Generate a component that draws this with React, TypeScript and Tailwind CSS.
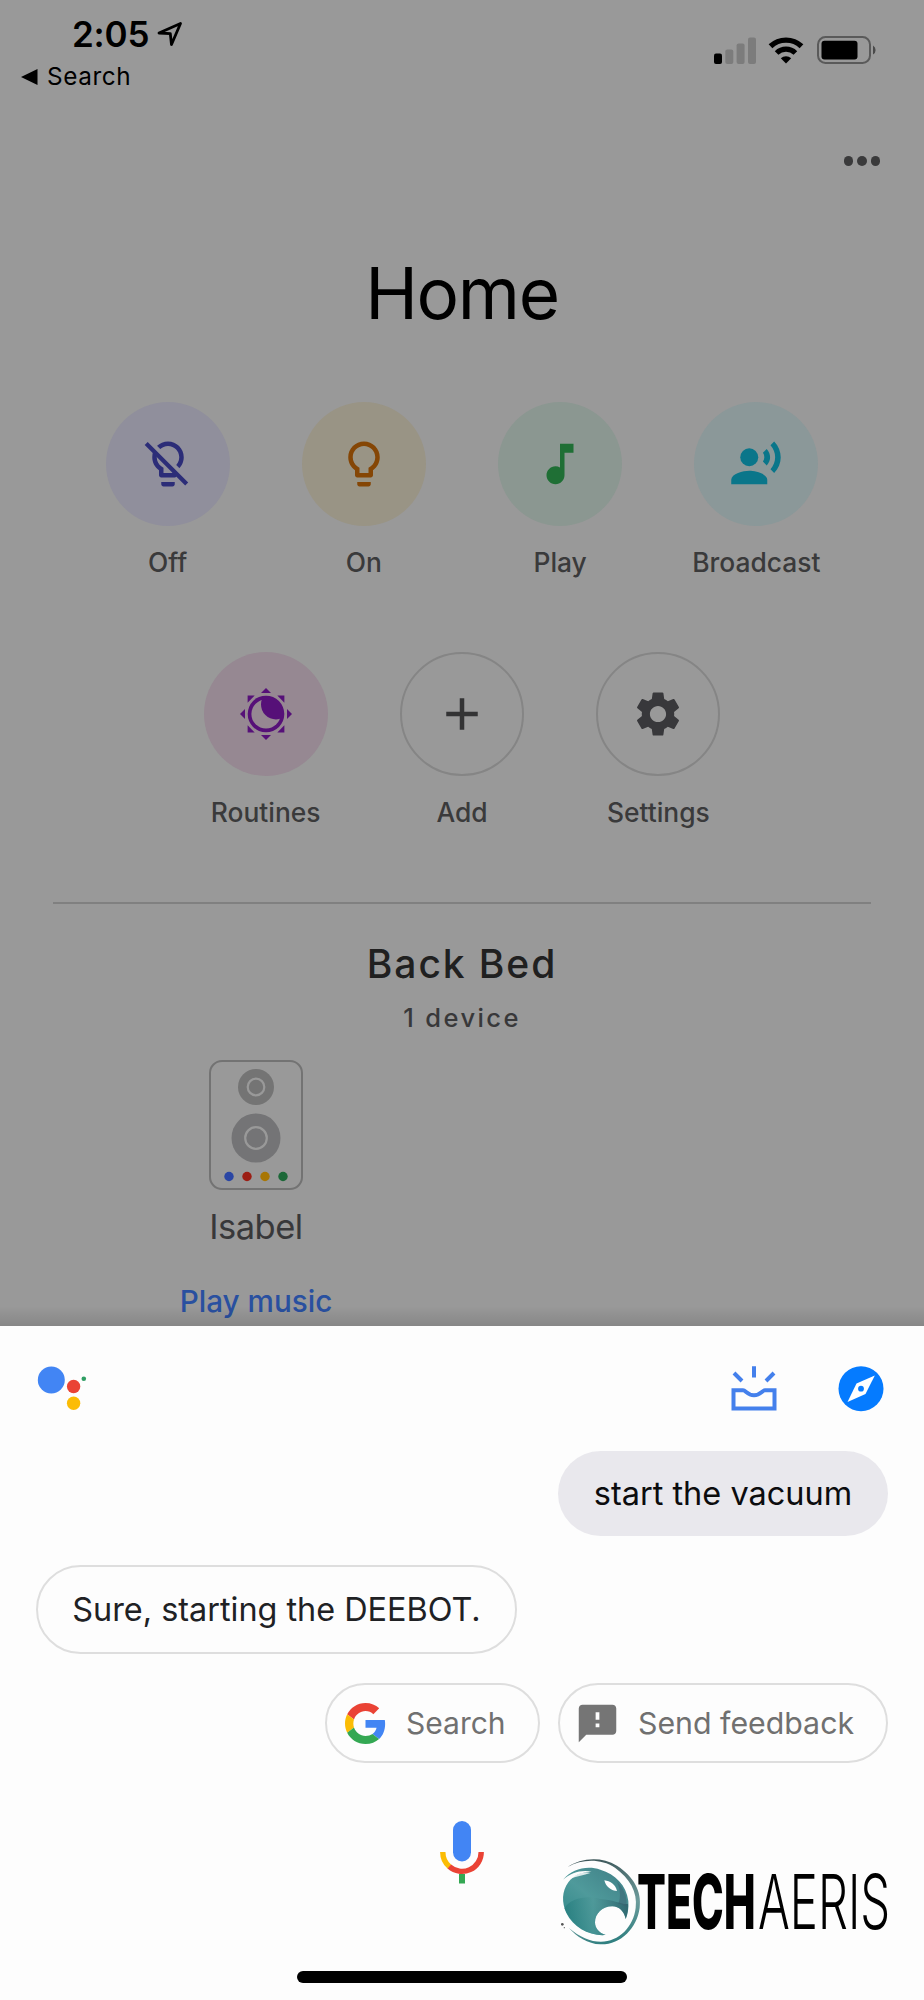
import React from "react";
import { MdAdd, MdFeedback, MdSettings } from "react-icons/md";

const BULB =
  "M9 21c0 .55.45 1 1 1h4c.55 0 1-.45 1-1v-1H9v1zm3-19C8.14 2 5 5.14 5 9c0 2.38 1.19 4.47 3 5.74V17c0 .55.45 1 1 1h6c.55 0 1-.45 1-1v-2.26c1.81-1.27 3-3.36 3-5.74 0-3.86-3.14-7-7-7zm2.85 11.1l-.85.6V16h-4v-2.3l-.85-.6C7.8 12.16 7 10.63 7 9c0-2.76 2.24-5 5-5s5 2.24 5 5c0 1.63-.8 3.16-2.15 4.1z";

function BulbOff() {
  return (
    <svg viewBox="0 0 24 24" className="size-[54px]" fill="#2c2d78">
      <mask id="slash">
        <rect width="24" height="24" fill="#fff" />
        <path d="M3.4 1.6 L22 20.2" stroke="#000" strokeWidth="2" />
      </mask>
      <path d={BULB} mask="url(#slash)" />
      <path d="M2.3 2.9 L20.3 20.9" stroke="#2c2d78" strokeWidth="1.9" strokeLinecap="butt" />
    </svg>
  );
}

function Bulb() {
  return (
    <svg viewBox="0 0 24 24" className="size-[54px]" fill="#854605">
      <path d={BULB} />
    </svg>
  );
}

function Note() {
  return (
    <svg viewBox="0 0 24 24" className="size-[54px]" fill="#1f6f35">
      <path d="M12 3v10.55c-.59-.34-1.27-.55-2-.55-2.21 0-4 1.79-4 4s1.79 4 4 4 4-1.79 4-4V7h4V3h-6z" />
    </svg>
  );
}

function Voice() {
  return (
    <svg viewBox="0 0 24 24" className="size-[54px]" fill="#0a768a">
      <circle cx="9" cy="9" r="4" />
      <path d="M9 15c-2.67 0-8 1.34-8 4v2h16v-2c0-2.66-5.33-4-8-4z" />
      <path d="M16.76 5.36l-1.68 1.69c.84 1.18.84 2.71 0 3.89l1.68 1.69c2.02-2.02 2.02-5.07 0-7.27z" />
      <path d="M20.07 2l-1.63 1.63c2.77 3.02 2.77 7.56 0 10.74L20.07 16c3.9-3.89 3.91-9.95 0-14z" />
    </svg>
  );
}

function Routine() {
  return (
    <svg viewBox="-27 -27 54 54" className="size-[54px]" fill="#561078">
      <mask id="moon">
        <rect x="-27" y="-27" width="54" height="54" fill="#fff" />
        <circle r="14.6" fill="#000" />
        <circle cx="10" cy="-9.5" r="15" fill="#fff" />
      </mask>
      <circle r="18.3" mask="url(#moon)" />
      {[0, 45, 90, 135, 180, 225, 270, 315].map((a) => (
        <path key={a} d="M0 -26 L5 -21 H-5 Z" transform={`rotate(${a})`} />
      ))}
    </svg>
  );
}

function Action({ label, circle, children }: { label: string; circle: string; children: React.ReactNode }) {
  return (
    <div className="flex flex-col items-center">
      <div className={`flex size-[124px] items-center justify-center rounded-full ${circle}`}>{children}</div>
      <div className="flex h-[73px] items-center text-[26.4px] font-medium whitespace-nowrap text-[#3a3a3b]">{label}</div>
    </div>
  );
}

function StatusBar() {
  return (
    <div className="flex h-[100px] shrink-0 justify-between pr-[48px] pl-[21px] text-black">
      <div className="flex flex-col pt-[10px]">
        <div className="flex h-12 items-center gap-[8px] pl-[51px]">
          <span className="text-[35px] font-semibold tracking-[-0.2px]">2:05</span>
          <svg viewBox="0 0 26 26" className="size-[26px]">
            <path d="M2 12 L23.5 2.5 L14.5 23.5 L13.3 12.6 Z" fill="none" stroke="#000" strokeWidth="2.8" strokeLinejoin="round" />
          </svg>
        </div>
        <div className="flex h-[37px] items-center gap-[9px]">
          <svg viewBox="0 0 17 16" className="h-4 w-[17px]">
            <path d="M0 8 L16.5 0 V16 Z" />
          </svg>
          <span className="text-[24.3px] tracking-[0.6px]">Search</span>
        </div>
      </div>
      <div className="flex h-[100px] items-center">
        <svg viewBox="0 0 42 27" className="mr-3 h-[27px] w-[42px]" fill="#7c7c7c">
          <rect x="0" y="16.5" width="8" height="10.5" rx="2" fill="#000" />
          <rect x="11.3" y="12.5" width="8" height="14.5" rx="2" />
          <rect x="22.6" y="6.5" width="8" height="20.5" rx="2" />
          <rect x="34" y="0.5" width="8" height="26.5" rx="2" />
        </svg>
        <svg viewBox="0 0 36 27" className="mr-[13px] h-[27px] w-9" fill="none" stroke="#000">
          <path d="M2.5 9.3 A22.5 22.5 0 0 1 33.5 9.3" strokeWidth="5.4" strokeLinecap="butt" />
          <path d="M8.6 16 A13.5 13.5 0 0 1 27.4 16" strokeWidth="5.2" />
          <path d="M12.8 21.3 A7.6 7.6 0 0 1 23.2 21.3 L18 26.6 Z" fill="#000" stroke="none" />
        </svg>
        <svg viewBox="0 0 59 28" className="h-7 w-[59px]">
          <rect x="1" y="1" width="52" height="26" rx="7.5" fill="none" stroke="#5a5a5a" strokeWidth="2" />
          <rect x="4.5" y="4.8" width="36" height="18.6" rx="3" />
          <path d="M56 9.5 Q58.6 11 58.6 14 T56 18.5 Z" fill="#4a4a4a" />
        </svg>
      </div>
    </div>
  );
}

function Speaker() {
  return (
    <svg viewBox="0 0 94 130" className="h-[130px] w-[94px] shrink-0">
      <rect x="1" y="1" width="92" height="128" rx="12" fill="none" stroke="#737373" strokeWidth="2" />
      <circle cx="47" cy="27" r="18" fill="#747474" />
      <circle cx="47" cy="27" r="8.3" fill="none" stroke="#999" strokeWidth="2.2" />
      <circle cx="47" cy="78" r="24.5" fill="#747476" />
      <circle cx="47" cy="78" r="10.8" fill="none" stroke="#999" strokeWidth="2.2" />
      <circle cx="20" cy="116.5" r="4.7" fill="#2a46a4" />
      <circle cx="38" cy="116.5" r="4.7" fill="#9c1e14" />
      <circle cx="56" cy="116.5" r="4.7" fill="#a87604" />
      <circle cx="74" cy="116.5" r="4.7" fill="#1c6838" />
    </svg>
  );
}

function GoogleG() {
  return (
    <svg viewBox="0 0 48 48" className="size-[41px]">
      <path fill="#EA4335" d="M24 9.5c3.54 0 6.71 1.22 9.21 3.6l6.85-6.85C35.9 2.38 30.47 0 24 0 14.62 0 6.51 5.38 2.56 13.22l7.98 6.19C12.43 13.72 17.74 9.5 24 9.5z" />
      <path fill="#4285F4" d="M46.98 24.55c0-1.57-.15-3.09-.38-4.55H24v9.02h12.94c-.58 2.96-2.26 5.48-4.78 7.18l7.73 6c4.51-4.18 7.09-10.36 7.09-17.65z" />
      <path fill="#FBBC05" d="M10.53 28.59c-.48-1.45-.76-2.99-.76-4.59s.27-3.14.76-4.59l-7.98-6.19C.92 16.46 0 20.12 0 24c0 3.88.92 7.54 2.56 10.78l7.97-6.19z" />
      <path fill="#34A853" d="M24 48c6.48 0 11.93-2.13 15.89-5.81l-7.73-6c-2.15 1.45-4.92 2.3-8.16 2.3-6.26 0-11.57-4.22-13.47-9.91l-7.98 6.19C6.51 42.62 14.62 48 24 48z" />
    </svg>
  );
}

function Mic() {
  return (
    <svg viewBox="0 0 44 64" className="h-16 w-11" fill="none">
      <rect x="13" y="0" width="18" height="40.5" rx="9" fill="#4285F4" />
      <path d="M2.8 31 A19.2 19.2 0 0 0 9.5 45.8" stroke="#FBBC05" strokeWidth="5.4" />
      <path d="M9.3 45.6 A19.2 19.2 0 0 0 41.2 31" stroke="#EA4335" strokeWidth="5.4" />
      <rect x="19" y="53" width="6" height="9.5" fill="#34A853" />
    </svg>
  );
}

function Watermark() {
  return (
    <div className="absolute top-[1855px] left-[557px] flex h-[92px] items-center text-black">
      <svg viewBox="20 30 255 276" className="h-[92px] w-[85px] shrink-0">
        <defs>
          <linearGradient id="orb" x1="0.1" y1="1" x2="0.9" y2="0">
            <stop offset="0" stopColor="#2b8586" />
            <stop offset="0.5" stopColor="#4f9a9b" />
            <stop offset="1" stopColor="#3f7f86" />
          </linearGradient>
          <linearGradient id="shade" x1="0" y1="0.2" x2="1" y2="0.2">
            <stop offset="0" stopColor="#1f7879" />
            <stop offset="0.45" stopColor="#4f9999" />
            <stop offset="1" stopColor="#1f4f5a" />
          </linearGradient>
          <linearGradient id="rim" x1="0.3" y1="0" x2="0.5" y2="1">
            <stop offset="0" stopColor="#3c5558" />
            <stop offset="0.6" stopColor="#6d9c9c" />
            <stop offset="1" stopColor="#2f7f80" />
          </linearGradient>
        </defs>
        <path d="M52 66 C90 40 150 32 200 62 C250 94 275 140 268 188 C260 250 210 300 150 298 C112 296 80 276 55 248 C88 276 120 290 152 290 C205 290 250 245 256 188 C262 140 238 100 194 68 C150 40 95 42 52 66 Z" fill="url(#rim)" />
        <path d="M38 104 C65 72 110 60 150 74 C195 88 228 120 234 168 C236 190 232 208 226 222 C222 200 206 184 186 184 C156 184 134 206 134 232 C134 250 146 264 166 270 C118 274 70 248 48 204 C34 172 34 140 54 112 C70 90 95 80 124 80 C90 74 62 84 38 104 Z" fill="url(#orb)" />
        <path d="M42 190 C60 160 110 150 150 162 C190 164 222 182 233 176 C234 196 231 210 226 222 C222 200 206 184 186 184 C156 184 134 206 134 232 C134 250 146 264 166 270 C118 274 68 246 42 190 Z" fill="url(#shade)" opacity="0.6" />
        <path d="M200 110 C222 130 232 160 228 184 C220 182 212 176 204 176 C212 160 210 130 200 110 Z" fill="#3a5f70" opacity="0.5" />
        <path d="M162 106 C180 108 196 120 200 138 C184 138 166 126 162 106 Z" fill="#fff" />
        <path d="M62 100 C80 84 102 80 120 84 C100 90 80 94 62 100 Z" fill="#fff" opacity="0.8" />
        <circle cx="36" cy="238" r="4" fill="#555" />
        <circle cx="42" cy="248" r="2" fill="#666" />
      </svg>
      <div className="-ml-[5px] w-[121px]">
        <span className="inline-block origin-left scale-x-[0.57] text-[75px] leading-none font-extrabold">TECH</span>
      </div>
      <div className="w-[130px]">
        <span className="inline-block origin-left scale-x-[0.63] text-[75px] leading-none font-light">AERIS</span>
      </div>
    </div>
  );
}

export default function App() {
  return (
    <div className="relative flex h-[2000px] w-[924px] flex-col overflow-hidden bg-[#999999] font-['Inter','Liberation_Sans',sans-serif]">
      <div className="relative flex h-[1326px] shrink-0 flex-col overflow-hidden">
        <StatusBar />
        <div className="flex h-[122px] shrink-0 items-center justify-end gap-[4px] pr-[44px]">
          <span className="size-[9.5px] rounded-full bg-[#3a3a3b]" />
          <span className="size-[9.5px] rounded-full bg-[#3a3a3b]" />
          <span className="size-[9.5px] rounded-full bg-[#3a3a3b]" />
        </div>
        <h1 className="flex h-[141px] shrink-0 items-center justify-center pt-[2px] text-[71px] font-normal tracking-[-1.3px] text-black">Home</h1>
        <div className="mx-auto mt-[39px] grid w-[785px] shrink-0 grid-cols-4">
          <Action label="Off" circle="bg-[#908f9c]"><BulbOff /></Action>
          <Action label="On" circle="bg-[#999485]"><Bulb /></Action>
          <Action label="Play" circle="bg-[#8b9791]"><Note /></Action>
          <Action label="Broadcast" circle="bg-[#8b9899]"><Voice /></Action>
        </div>
        <div className="mx-auto mt-[53px] grid w-[589px] shrink-0 grid-cols-3">
          <Action label="Routines" circle="bg-[#968892]"><Routine /></Action>
          <Action label="Add" circle="border-2 border-[#858585]"><MdAdd className="size-[54px] text-[#333334]" /></Action>
          <Action label="Settings" circle="border-2 border-[#858585]"><MdSettings className="size-[54px] text-[#38383b]" /></Action>
        </div>
        <div className="mx-auto mt-[53px] h-[2px] w-[818px] shrink-0 bg-[#808080]" />
        <h2 className="mt-[36px] flex h-[49px] shrink-0 items-center justify-center text-[39px] font-medium tracking-[1.9px] text-[#202020]">Back Bed</h2>
        <div className="flex h-[59px] shrink-0 items-center justify-center text-[25.5px] font-[450] tracking-[2.4px] text-[#38383a]">1 device</div>
        <div className="mt-[12px] ml-[60px] flex w-[392px] flex-col items-center">
          <Speaker />
          <div className="flex h-[74px] shrink-0 items-center text-[34.5px] tracking-[-0.5px] text-[#38383a]">Isabel</div>
          <div className="flex h-[74px] shrink-0 items-center text-[29.7px] font-medium whitespace-nowrap text-[#2950a0]">Play music</div>
        </div>
        <div className="absolute inset-x-0 bottom-0 h-5 bg-linear-to-b from-transparent to-black/12" />
      </div>

      <div className="flex grow flex-col bg-[#fdfdfd] px-9">
        <div className="flex h-[125px] items-center">
          <svg viewBox="0 0 52 46" className="h-[46px] w-[52px]">
            <circle cx="15.3" cy="14" r="13.5" fill="#4285F4" />
            <circle cx="37.6" cy="20.5" r="6.7" fill="#EA4335" />
            <circle cx="37.6" cy="37.2" r="6.7" fill="#FBBC05" />
            <circle cx="47.8" cy="12.8" r="2.3" fill="#2f9e63" />
          </svg>
          <svg viewBox="0 0 46 46" className="mr-[61px] ml-auto size-[46px]" fill="none" stroke="#4480ec" strokeWidth="4">
            <path d="M2.5 24.3 H12 C15 24.3 16 29.2 23 29.2 S31 24.3 34 24.3 H43.5 V42.5 H2.5 Z" />
            <path d="M23 0.3 V11.5 M3 7 L11 15 M43 7 L35 15" />
          </svg>
          <svg viewBox="0 0 46 46" className="mr-[4px] size-[46px]">
            <circle cx="23" cy="22.7" r="22.5" fill="#057bff" />
            <path d="M36.8 9.5 L27.5 28 L9.5 36 L18.5 17.5 Z" fill="#fff" />
            <circle cx="23" cy="22.7" r="2.9" fill="#057bff" />
          </svg>
        </div>
        <div className="flex h-[85px] w-[330px] items-center justify-center self-end rounded-full bg-[#e9e8ed] pt-[2px] text-[32.5px] whitespace-nowrap text-[#0c0c0e]">
          start the vacuum
        </div>
        <div className="mt-[29px] flex h-[89px] w-[481px] items-center justify-center rounded-full border-2 border-[#dedede] pt-[2px] text-[32.4px] whitespace-nowrap text-[#202124]">
          Sure, starting the DEEBOT.
        </div>
        <div className="mt-[29px] flex h-20 justify-end gap-[18px]">
          <div className="flex w-[215px] items-center rounded-full border-2 border-[#dedede] pl-[18px]">
            <GoogleG />
            <span className="ml-[20px] text-[30px] text-[#707070]">Search</span>
          </div>
          <div className="flex w-[330px] items-center rounded-full border-2 border-[#dedede] pl-[15px]">
            <MdFeedback className="size-[45px] text-[#757575]" />
            <span className="ml-[18px] pt-px text-[30.3px] whitespace-nowrap text-[#707070]">Send feedback</span>
          </div>
        </div>
        <div className="mt-[58px] flex justify-center">
          <Mic />
        </div>
        <div className="mx-auto mt-[86px] h-[12px] w-[330px] rounded-full bg-black" />
      </div>
      <Watermark />
    </div>
  );
}
